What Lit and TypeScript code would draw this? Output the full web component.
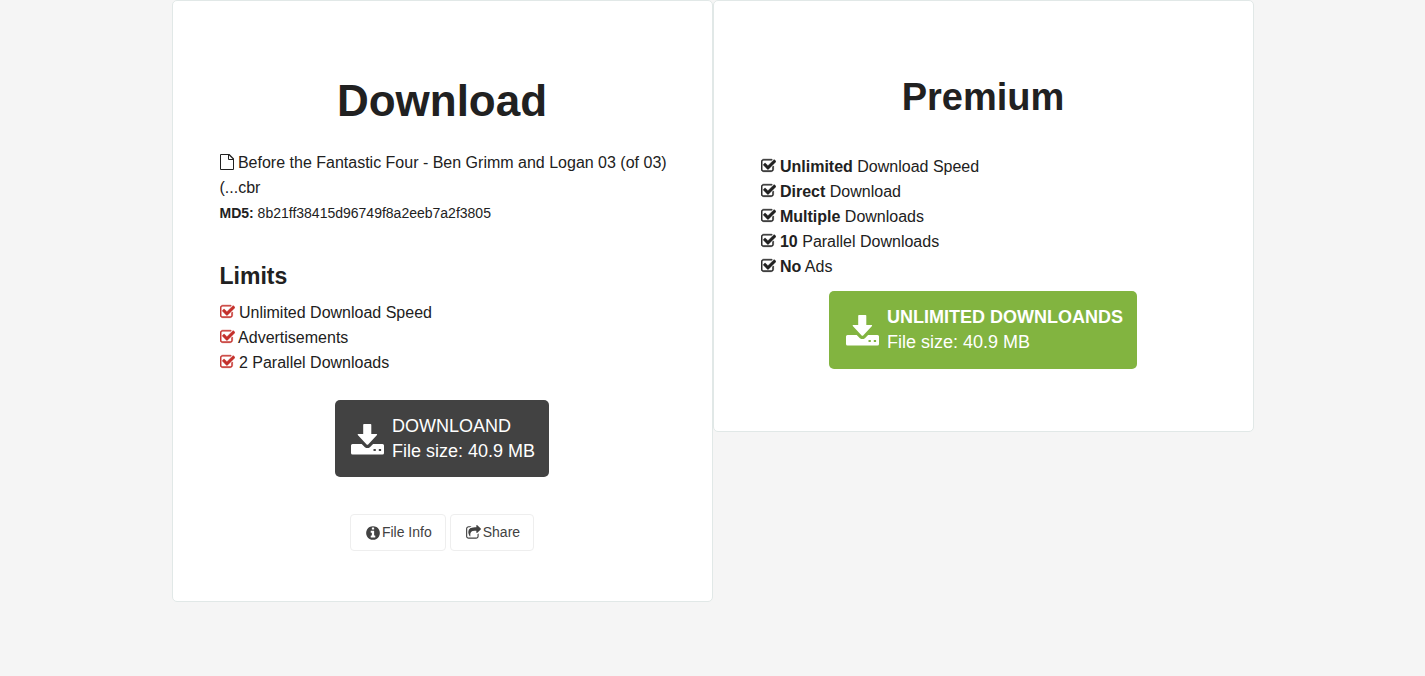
import { LitElement, html, css, svg } from "lit";
import { customElement, property } from "lit/decorators.js";

const ICONS: Record<string, { box: string; body: unknown }> = {
  check: {
    box: "64 0 1664 1792",
    body: svg`<path stroke="currentColor" stroke-width="50" d="M1472 930v318q0 119-84.5 203.5t-203.5 84.5h-832q-119 0-203.5-84.5t-84.5-203.5v-832q0-119 84.5-203.5t203.5-84.5h832q63 0 117 25 15 7 18 23 3 17-9 29l-49 49q-10 10-23 10-3 0-9-2-23-6-45-6h-832q-66 0-113 47t-47 113v832q0 66 47 113t113 47h832q66 0 113-47t47-113v-254q0-13 9-22l64-64q10-10 23-10 6 0 12 3 20 8 20 29zm231-489l-814 814q-24 24-57 24t-57-24l-430-430q-24-24-24-57t24-57l110-110q24-24 57-24t57 24l263 263 647-647q24-24 57-24t57 24l110 110q24 24 24 57t-24 57z"/>`,
  },
  info: {
    box: "128 0 1536 1792",
    body: svg`<path d="M1152 1376v-160q0-14-9-23t-23-9h-96v-512q0-14-9-23t-23-9h-320q-14 0-23 9t-9 23v160q0 14 9 23t23 9h96v320h-96q-14 0-23 9t-9 23v160q0 14 9 23t23 9h448q14 0 23-9t9-23zm-128-896v-160q0-14-9-23t-23-9h-192q-14 0-23 9t-9 23v160q0 14 9 23t23 9h192q14 0 23-9t9-23zm640 416q0 209-103 385.5t-279.5 279.5-385.500 103-385.500-103-279.500-279.500-103-385.500 103-385.500 279.500-279.500 385.500-103 385.500 103 279.500 279.500 103 385.500z"/>`,
  },
  share: {
    box: "64 0 1664 1792",
    body: svg`<path d="M1472 989v259q0 119-84.5 203.5t-203.5 84.5h-832q-119 0-203.5-84.5t-84.5-203.5v-832q0-119 84.5-203.5t203.5-84.5h255q13 0 22.5 9.5t9.5 22.5q0 27-26 32-77 26-133 60-10 4-16 4h-112q-66 0-113 47t-47 113v832q0 66 47 113t113 47h832q66 0 113-47t47-113v-214q0-19 18-29 28-13 54-37 16-16 35-8 21 9 21 29zm237-496l-384 384q-18 19-45 19-12 0-25-5-39-17-39-59v-192h-160q-323 0-438 131-119 137-74 473 3 23-20 34-8 2-12 2-16 0-26-13-10-14-21-31t-39.5-68.5-49.5-99.5-38.5-114-17.5-122q0-49 3.500-91t14-90 28-88 47-81.500 68.500-74 94.500-61.500 124.500-48.500 159.500-30.500 196.500-11h160v-192q0-42 39-59 13-5 25-5 26 0 45 19l384 384q19 19 19 45t-19 45z"/>`,
  },
  file: {
    box: "0 0 14 16",
    body: svg`<path fill-rule="evenodd" d="M1 0h8.500l4.500 4.500v10.500q0 1-1 1h-12q-1 0-1-1v-14q0-1 1-1zm0 1v14h12v-9h-4q-1 0-1-1v-4zm8 .4v3.600h3.600z"/>`,
  },
  download: {
    box: "0 0 33 31",
    body: svg`<path fill-rule="evenodd" d="M12.500 0h7q.8 0 .8.800v9.200h5.200q1 0 .5 1l-8.600 9.200q-1 1-2 0l-8.600-9.200q-.6-1 .5-1h4.900v-9.200q0-.8.8-.8zM1.500 20h9.200l3.200 3.200q2.500 1.700 5 0l3.200-3.200h9.400q1.500 0 1.500 1.500v7.500q0 1.500-1.500 1.500h-30q-1.500 0-1.500-1.500v-7.500q0-1.500 1.500-1.500zM22.500 25v2h2.300v-2zm5.300 0v2h2.300v-2z"/>`,
  },
};

@customElement("ui-icon")
class UiIcon extends LitElement {
  @property() name = "check";
  static styles = css`
    :host { display: inline-block; line-height: 0; }
    svg { display: block; width: 100%; height: 100%; fill: currentColor; }
  `;
  render() {
    const icon = ICONS[this.name];
    return html`<svg viewBox=${icon.box} aria-hidden="true">${icon.body}</svg>`;
  }
}

@customElement("app-root")
class AppRoot extends LitElement {
  static styles = css`
    :host {
      display: block;
      min-height: 100vh;
      background: #f5f5f5;
      color: #212121;
      font: 16px/25px "Liberation Sans", Arial, sans-serif;
    }
    * { box-sizing: border-box; }
    .page {
      display: grid;
      grid-template-columns: 1fr 1fr;
      align-items: start;
      max-width: 1082px;
      margin: 0 auto;
    }
    .card {
      background: #fff;
      border: 1px solid #e1e8e7;
      border-radius: 5px;
      padding: 75px 47px 50px;
    }
    .premium { padding-bottom: 62px; }
    h1, h2, h3, p, ul { margin: 0; padding: 0; }
    h1, h2 { text-align: center; }
    h1 { font-size: 44px; line-height: 50px; margin-bottom: 24px; }
    h2 { font-size: 38px; line-height: 42px; margin-bottom: 36px; }
    h3 { font-size: 23px; line-height: 32px; margin: 34px 0 8px; }
    .name { margin-right: -12px; }
    small { font-size: 14px; }
    ul { list-style: none; }
    .check { width: 15px; height: 16px; vertical-align: -2px; }
    .limits .check { color: #c4302b; }
    .file { width: 14px; height: 16px; vertical-align: -2px; }
    .action { display: flex; justify-content: center; }
    .big {
      display: flex;
      align-items: center;
      gap: 8px;
      padding: 14px 14px 13px 16px;
      border: 0;
      border-radius: 5px;
      background: #424242;
      color: #fff;
      font: 18px/25px "Liberation Sans", Arial, sans-serif;
      text-align: left;
    }
    .limits + .action { margin-top: 25px; }
    .green { background: #82b440; margin-top: 12px; padding: 14px 14px 14px 17px; }
    .big .text { display: grid; }
    .big ui-icon { width: 33px; height: 31px; }
    .links { display: flex; justify-content: center; gap: 4px; margin-top: 37px; }
    .link {
      display: flex;
      align-items: center;
      gap: 2px;
      padding: 5px 13px 5px 15px;
      border: 1px solid #eee;
      border-radius: 4px;
      background: #fff;
      color: #424242;
      font: 14px/25px "Liberation Sans", Arial, sans-serif;
    }
    .link ui-icon { width: 14px; height: 16px; }
    .link ui-icon[name="share"] { width: 15px; }
  `;

  private limits = ["Unlimited Download Speed", "Advertisements", "2 Parallel Downloads"];
  private perks = [
    ["Unlimited", "Download Speed"],
    ["Direct", "Download"],
    ["Multiple", "Downloads"],
    ["10", "Parallel Downloads"],
    ["No", "Ads"],
  ];

  render() {
    return html`<main class="page">
      <section class="card">
        <h1>Download</h1>
        <p class="name"><ui-icon class="file" name="file"></ui-icon> Before the Fantastic Four - Ben Grimm and Logan 03 (of 03) (...cbr</p>
        <p><small><b>MD5:</b> 8b21ff38415d96749f8a2eeb7a2f3805</small></p>
        <h3>Limits</h3>
        <ul class="limits">
          ${this.limits.map((t) => html`<li><ui-icon class="check" name="check"></ui-icon> ${t}</li>`)}
        </ul>
        <div class="action">
          <button class="big">
            <ui-icon name="download"></ui-icon>
            <span class="text"><span>DOWNLOAND</span><span>File size: 40.9 MB</span></span>
          </button>
        </div>
        <div class="links">
          <button class="link"><ui-icon name="info"></ui-icon>File Info</button>
          <button class="link"><ui-icon name="share"></ui-icon>Share</button>
        </div>
      </section>
      <section class="card premium">
        <h2>Premium</h2>
        <ul>
          ${this.perks.map(([a, b]) => html`<li><ui-icon class="check" name="check"></ui-icon> <b>${a}</b> ${b}</li>`)}
        </ul>
        <div class="action">
          <button class="big green">
            <ui-icon name="download"></ui-icon>
            <span class="text"><b>UNLIMITED DOWNLOANDS</b><span>File size: 40.9 MB</span></span>
          </button>
        </div>
      </section>
    </main>`;
  }
}
